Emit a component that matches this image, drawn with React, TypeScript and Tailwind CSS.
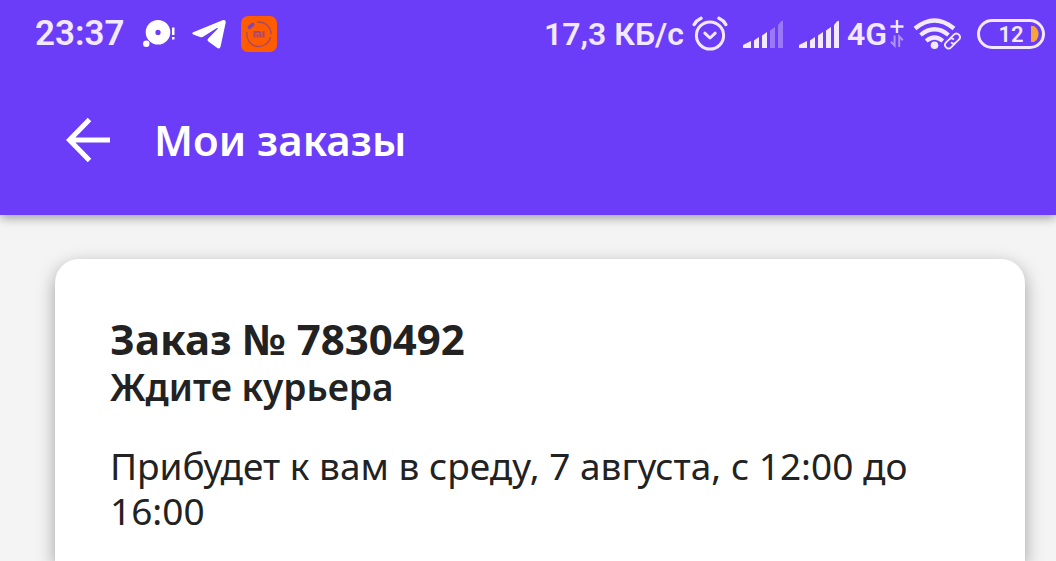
type SignalProps = {
  label: string;
  level: number;
};

const signalBars = [
  "M0 39.500V37L8 33V40H0Z",
  "M11 32.500L16 29V40H11Z",
  "M19 27.500L24 24V40H19Z",
  "M27 22.500L32 19V40H27Z",
  "M35 17L38 13.500Q40 12 40 14V40H35Z",
];

function Signal({ label, level }: SignalProps) {
  return (
    <svg role="img" aria-label={label} viewBox="0 11 41 30" className="h-[30px] w-[41px] shrink-0">
      {signalBars.map((bar, index) => (
        <path key={bar} d={bar} fill="currentColor" opacity={index < level ? 1 : 0.35} />
      ))}
    </svg>
  );
}

function ChatIcon() {
  return (
    <svg aria-hidden="true" viewBox="0 0 34 30" className="h-[30px] w-[34px] shrink-0" fill="white">
      <path
        fillRule="evenodd"
        d="M15 1a12.300 12.300 0 1 1 0 24.600a12.300 12.300 0 0 1 0-24.600ZM15 10.800a2.600 2.600 0 1 0 0 5.200a2.600 2.600 0 0 0 0-5.200Z"
      />
      <circle cx="3.300" cy="24.800" r="3.200" />
      <path d="M29 8.500h2.500v7.500H29zM29 18h2.500v2.600H29z" />
    </svg>
  );
}

function TelegramIcon() {
  return (
    <svg aria-hidden="true" viewBox="0 0 34 30" className="h-[30px] w-[34px] shrink-0" fill="white">
      <path d="M1.200 13.300L30.500 1.200Q34 .2 33.700 3.500L28.600 27.500Q27.800 30.500 25 28.800L16.400 22.400Q14.800 21 16.200 19.500L25.500 10Q26.500 8.300 24.500 9.200L11.500 17.600Q9.800 18.600 8 18L1.200 15.500Q-.8 14.300 1.200 13.300Z" />
    </svg>
  );
}

function MiIcon() {
  return (
    <svg aria-hidden="true" viewBox="0 0 36 36" className="size-9 shrink-0">
      <rect width="36" height="36" rx="7" fill="#ff5c00" />
      <g fill="none" stroke="#a8476c" strokeWidth="1.300">
        <path d="M16 6.200A12 12 0 0 1 30 18.500" />
        <path d="M29.600 21A12 12 0 0 1 6.100 16" />
      </g>
      <path d="M8.300 11.300L11.700 8.500" stroke="#8a43ab" strokeWidth="3.600" strokeLinecap="round" />
      <path
        d="M13.500 21.500V16H18Q19.400 16 19.400 17.500V21.500M16.500 18V21.500M22.500 15.200V21.500"
        fill="none"
        stroke="#a8476c"
        strokeWidth="2"
      />
    </svg>
  );
}

function AlarmIcon() {
  return (
    <svg
      role="img"
      aria-label="Будильник"
      viewBox="0 0 36 36"
      className="size-9 shrink-0"
      fill="none"
      stroke="currentColor"
      strokeLinecap="round"
      strokeLinejoin="round"
    >
      <circle cx="18" cy="19.500" r="13.600" strokeWidth="3" />
      <path d="M12.800 17.200L18 22L23.200 17.200" strokeWidth="3" />
      <path d="M2.200 8.500Q4.500 4.300 9 2.300M33.800 8.500Q31.500 4.300 27 2.300" strokeWidth="3.400" />
    </svg>
  );
}

function NetworkIcon() {
  return (
    <svg aria-hidden="true" viewBox="0 0 14 30" className="h-[30px] w-[14px] shrink-0" fill="none" stroke="currentColor">
      <path d="M7 1V14M.5 7.500H13.500" strokeWidth="2.400" />
      <path d="M4.600 16.500V26.500L1 22.800M9.200 28V17.500L12.800 21.200" strokeWidth="2" opacity=".5" />
    </svg>
  );
}

function WifiIcon() {
  return (
    <svg role="img" aria-label="Wi-Fi" viewBox="0 0 48 32" className="h-8 w-12 shrink-0" fill="none" stroke="currentColor">
      <path d="M2 10.500Q21.500-5.500 41 10.500" strokeWidth="4.400" />
      <path d="M7.500 17Q21.500 5.500 35.500 17" strokeWidth="4.200" />
      <path d="M13.200 23Q21.500 16 29.800 23" strokeWidth="4.200" />
      <circle cx="21.500" cy="27.300" r="3.800" fill="currentColor" stroke="none" />
      <g strokeWidth="1.900" transform="rotate(-45 39.500 23)">
        <path d="M39 19.500H45Q48.500 19.500 48.500 23T45 26.500H41Q37.500 26.500 37.500 23" />
        <path d="M40 26.500H34Q30.500 26.500 30.500 23T34 19.500H38Q41.500 19.500 41.500 23" />
      </g>
    </svg>
  );
}

function Battery() {
  return (
    <div className="relative flex h-[30px] w-[68px] shrink-0 items-center justify-center rounded-full border-3 border-current">
      <span className="text-[22px] font-semibold">12</span>
      <svg aria-hidden="true" viewBox="0 0 8 16" className="absolute right-[3px] h-4 w-2">
        <path d="M0 0H3Q7.500 3 7.500 8T3 16H0Z" fill="#f7a636" />
      </svg>
    </div>
  );
}

function StatusBar() {
  return (
    <div className="flex h-[68px] items-center justify-between pl-[35px] pr-[11px] font-['Roboto',sans-serif] text-[32px] font-semibold text-[#f2e8ff]">
      <div className="flex items-center">
        <time className="text-[35px]">23:37</time>
        <div className="ml-[18px] flex items-center gap-[15px]">
          <ChatIcon />
          <TelegramIcon />
          <MiIcon />
        </div>
      </div>
      <div className="flex items-center">
        <span className="whitespace-nowrap">17,3 КБ/с</span>
        <div className="ml-2 flex items-center gap-[15px]">
          <AlarmIcon />
          <Signal label="SIM 1" level={3} />
          <Signal label="SIM 2" level={5} />
        </div>
        <span className="ml-[7px]">4G</span>
        <div className="ml-[3px] flex items-center gap-[9px]">
          <NetworkIcon />
          <WifiIcon />
        </div>
        <div className="ml-4">
          <Battery />
        </div>
      </div>
    </div>
  );
}

export default function App() {
  return (
    <div className="flex min-h-screen flex-col bg-[#f4f4f4] font-['Noto_Sans',sans-serif] text-[#222222]">
      <header className="relative bg-[#6b3df8] pb-[43px] shadow-[0_3px_10px_rgba(0,0,0,0.35)]">
        <StatusBar />
        <div className="flex items-center gap-[43px] px-[65px] pt-10">
          <button type="button" aria-label="Назад" className="text-white">
            <svg aria-hidden="true" viewBox="0 0 46 46" className="size-[46px]" fill="none" stroke="currentColor" strokeWidth="5">
              <path d="M24.500 2.500L4.500 23L24.500 43.500M4 23H45" />
            </svg>
          </button>
          <h1 className="text-[42px] font-semibold leading-[64px] text-white">Мои заказы</h1>
        </div>
      </header>

      <main className="flex flex-1 flex-col pl-[55px] pr-[31px] pt-11">
        <article className="flex-1 rounded-t-3xl bg-white px-[55px] pb-1 pt-14 shadow-[0_6px_18px_rgba(0,0,0,0.35)]">
          <h2 className="text-[42px] font-bold leading-[48px]">Заказ № 7830492</h2>
          <p className="text-[37px] font-semibold leading-[48px]">Ждите курьера</p>
          <p className="mt-8 text-[37px] leading-[45px]">
            Прибудет к вам в среду, 7 августа, с 12:00 до 16:00
          </p>
        </article>
      </main>
    </div>
  );
}
